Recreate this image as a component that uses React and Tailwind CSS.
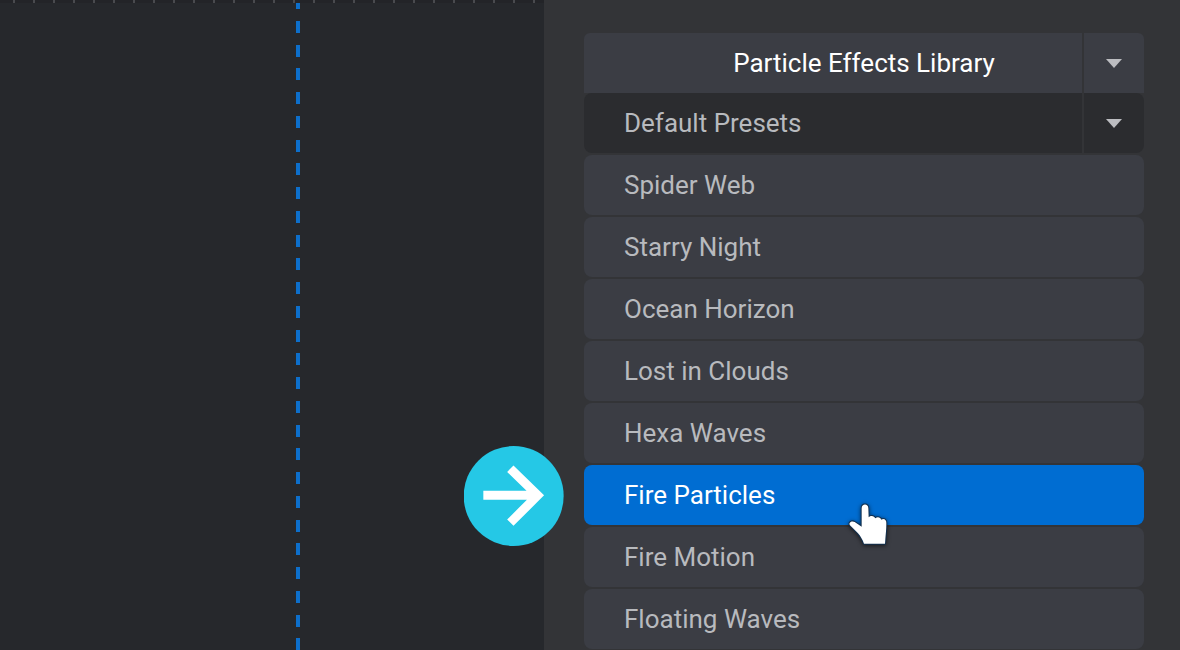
import { useState } from 'react';
import clsx from 'clsx';

const presets = [
  'Spider Web',
  'Starry Night',
  'Ocean Horizon',
  'Lost in Clouds',
  'Hexa Waves',
  'Fire Particles',
  'Fire Motion',
  'Floating Waves',
];

const Caret = () => (
  <svg
    className="mx-auto h-[10px] w-4 fill-[#bcbdc1]"
    viewBox="0 0 16 10"
    aria-hidden="true"
  >
    <path d="M0 1H16L8 10Z" />
  </svg>
);

const Canvas = () => (
  <div className="relative overflow-hidden bg-[#26282c]">
    <svg className="absolute inset-0 h-full w-full" aria-hidden="true">
      <defs>
        <pattern id="ticks" width="20" height="3" patternUnits="userSpaceOnUse">
          <rect width="20" height="3" fill="#232428" />
          <rect x="13" width="2" height="3" fill="#494a4e" />
        </pattern>
      </defs>
      <line
        x1="298"
        y1="-3"
        x2="298"
        y2="100%"
        stroke="#0d6fcb"
        strokeWidth="4"
        strokeDasharray="12 12 12 12 12 11 12 12"
      />
      <rect width="100%" height="3" fill="url(#ticks)" />
    </svg>
  </div>
);

const Pointer = () => (
  <svg
    className="pointer-events-none absolute top-9 left-[262px] z-10 h-12 w-11 overflow-visible drop-shadow-[0_1px_2px_rgba(0,0,0,0.6)]"
    viewBox="48 60 132 144"
    aria-hidden="true"
  >
    <path
      d="M95 82C95 67 115 67 115 82L116 109C122 102 133 104 136 112C142 106 152 109 154 116C162 111 170 117 169 127C169 147 167 163 166 175L165 188H102C98 177 92 166 84 157L60 133C54 124 66 118 74 123L95 137Z"
      fill="#fff"
      stroke="#12304f"
      strokeWidth="6"
      strokeLinejoin="round"
      paintOrder="stroke"
    />
  </svg>
);

const ArrowBadge = () => (
  <svg
    className="pointer-events-none absolute top-[-19px] left-[-120px] size-[100px]"
    viewBox="0 0 300 300"
    aria-hidden="true"
  >
    <circle cx="149" cy="150" r="150" fill="#25c8e6" />
    <path
      d="M58 148H221M139 68L221 148L139 230"
      fill="none"
      stroke="#fff"
      strokeWidth="27"
    />
  </svg>
);

const App = () => {
  const [selected, setSelected] = useState('Fire Particles');

  return (
    <div className="grid min-h-screen grid-cols-[136fr_159fr] bg-[#333437] font-[Roboto,sans-serif] text-[26px] leading-8 text-[#b8babe]">
      <Canvas />
      <div className="pt-[33px] pr-9 pl-10">
        <div className="flex h-[60px] gap-0.5">
          <button
            type="button"
            className="flex-1 rounded-tl-md bg-[#3b3d44] pl-[62px] text-center text-white"
          >
            Particle Effects Library
          </button>
          <button
            type="button"
            aria-label="Open library menu"
            className="w-[60px] rounded-tr-md bg-[#3b3d44]"
          >
            <Caret />
          </button>
        </div>
        <div className="flex h-[60px] gap-0.5">
          <button
            type="button"
            className="flex-1 rounded-l-lg bg-[#2b2c2f] pl-10 text-left"
          >
            Default Presets
          </button>
          <button
            type="button"
            aria-label="Open preset groups"
            className="w-[60px] rounded-r-lg bg-[#2b2c2f]"
          >
            <Caret />
          </button>
        </div>
        <ul className="mt-0.5 flex flex-col gap-0.5">
          {presets.map((preset) => (
            <li key={preset} className="relative">
              <button
                type="button"
                onClick={() => setSelected(preset)}
                className={clsx(
                  'block h-[60px] w-full rounded-lg pl-10 text-left',
                  preset === selected
                    ? 'bg-[#006dd2] text-white'
                    : 'bg-[#3b3d44]'
                )}
              >
                {preset}
              </button>
              {preset === selected && (
                <>
                  <ArrowBadge />
                  <Pointer />
                </>
              )}
            </li>
          ))}
        </ul>
      </div>
    </div>
  );
};

export default App;
